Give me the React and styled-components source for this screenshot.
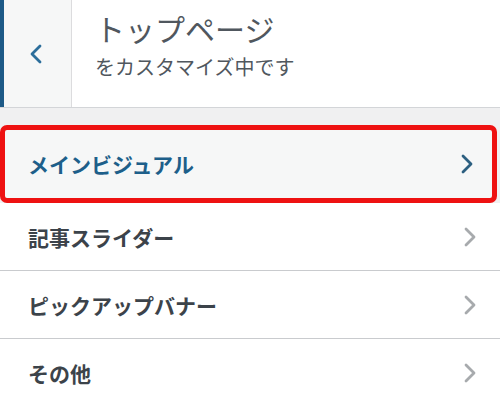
import styled, { createGlobalStyle } from 'styled-components';

const GlobalStyle = createGlobalStyle`
  html, body {
    margin: 0;
    padding: 0;
    background: #f0f0f1;
    font-family: "Noto Sans CJK JP", "Noto Sans", sans-serif;
  }
`;

const Panel = styled.div`
  width: 500px;
  height: 403px;
  overflow: hidden;
  background: #f0f0f1;
`;

const Header = styled.header`
  display: flex;
  height: 107px;
  background: #ffffff;
  border-bottom: 1px solid #d3d5d8;
`;

const BackButton = styled.button`
  display: flex;
  align-items: center;
  justify-content: center;
  width: 72px;
  padding: 0 4px 0 0;
  border: none;
  border-left: 4px solid #1d5a87;
  border-right: 1px solid #dcdcde;
  background: #f6f7f7;
  cursor: pointer;
`;

const TitleBlock = styled.div`
  display: flex;
  flex-direction: column;
  padding: 9px 0 0 23px;
`;

const Title = styled.h1`
  margin: 0;
  font-size: 30px;
  font-weight: 400;
  line-height: 38px;
  color: #50575e;
`;

const Subtitle = styled.p`
  margin: 7px 0 0;
  font-size: 20px;
  line-height: 26px;
  color: #50575e;
`;

const List = styled.ul`
  list-style: none;
  margin: 0;
  padding: 17px 3px 0 0;
`;

const Item = styled.li`
  display: flex;
  align-items: center;
  justify-content: space-between;
  box-sizing: border-box;
  height: ${(p) => (p.$active ? '78px' : '68px')};
  padding: 0 ${(p) => (p.$active ? '17px' : '22px')} 0 ${(p) => (p.$active ? '23px' : '28px')};
  background: ${(p) => (p.$active ? '#f6f7f7' : '#ffffff')};
  border: ${(p) => (p.$active ? '5px solid #ee1111' : 'none')};
  border-radius: ${(p) => (p.$active ? '7px' : '0')};
  border-bottom: ${(p) => (p.$active ? '5px solid #ee1111' : '1px solid #c9cbce')};
  margin-right: ${(p) => (p.$active ? '0' : '-3px')};
  color: ${(p) => (p.$active ? '#1d5f8a' : '#3c434a')};
  font-size: 21px;
  font-weight: 700;
  cursor: pointer;

  &:last-child {
    border-bottom: none;
  }
`;

const Chevron = ({ dir = 'right', color }) => (
  <svg width="16" height="22" viewBox="0 0 16 22" fill="none">
    <path
      d={dir === 'right' ? 'M4 3l8 8-8 8' : 'M12 3L4 11l8 8'}
      stroke={color}
      strokeWidth="2.8"
      strokeLinecap="round"
      strokeLinejoin="round"
    />
  </svg>
);

const items = ['メインビジュアル', '記事スライダー', 'ピックアップバナー', 'その他'];

export default function App() {
  return (
    <Panel>
      <GlobalStyle />
      <Header>
        <BackButton aria-label="戻る">
          <Chevron dir="left" color="#2c6e9b" />
        </BackButton>
        <TitleBlock>
          <Title>トップページ</Title>
          <Subtitle>をカスタマイズ中です</Subtitle>
        </TitleBlock>
      </Header>
      <List>
        {items.map((label, i) => (
          <Item key={label} $active={i === 0}>
            {label}
            <Chevron color={i === 0 ? '#2c5f80' : '#a7aaad'} />
          </Item>
        ))}
      </List>
    </Panel>
  );
}
